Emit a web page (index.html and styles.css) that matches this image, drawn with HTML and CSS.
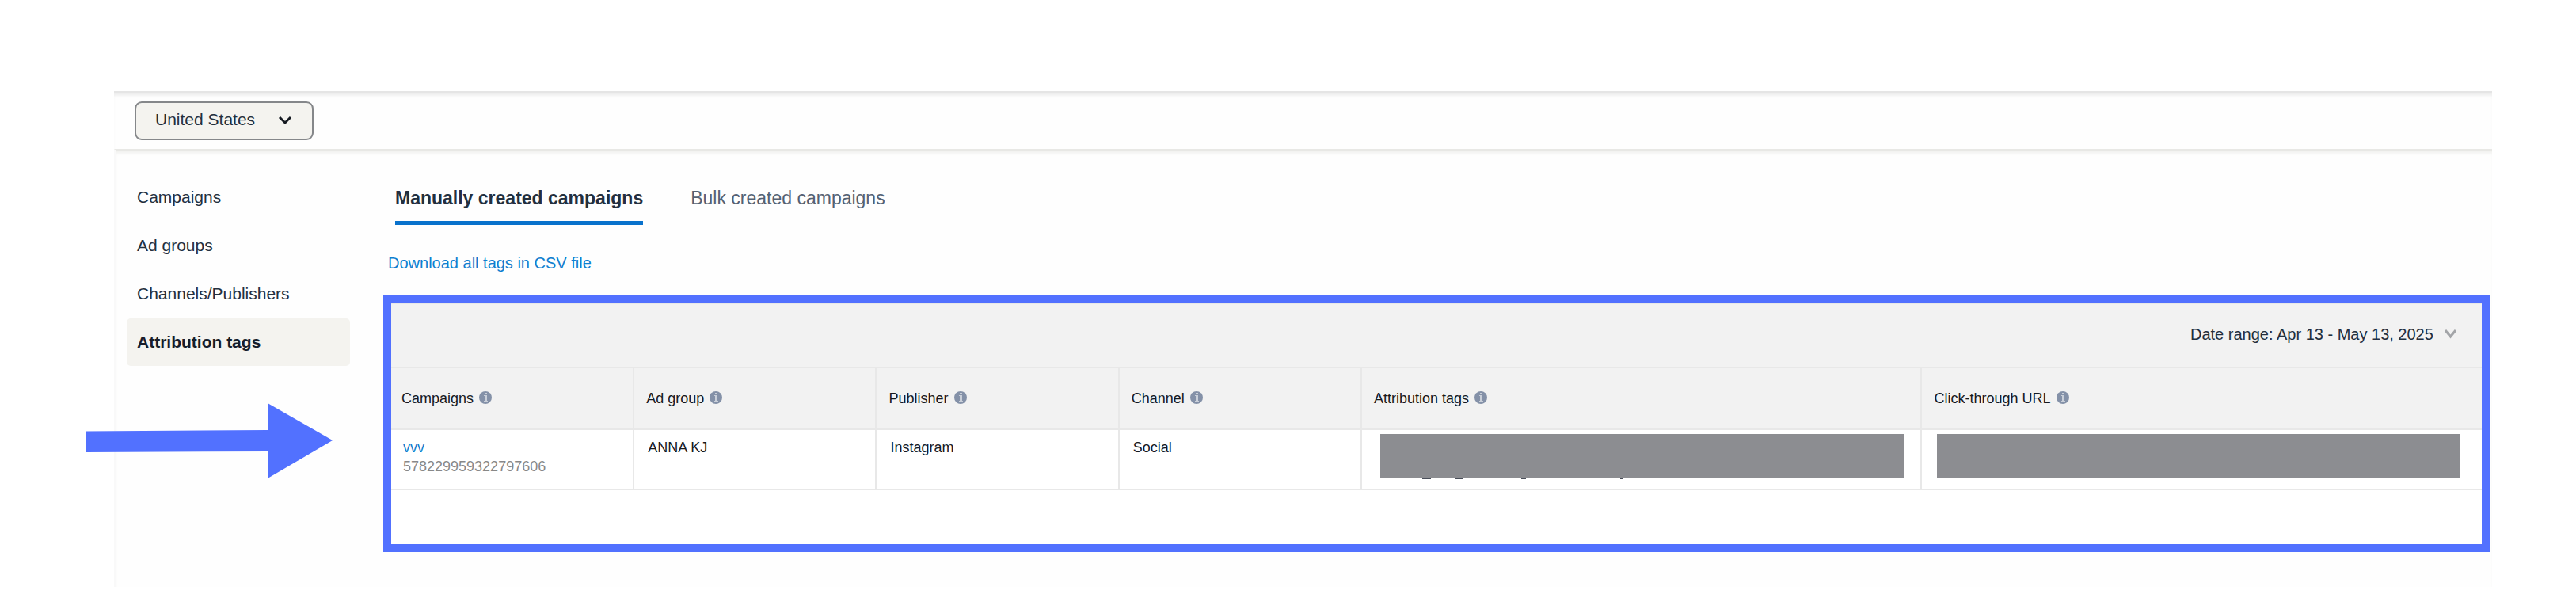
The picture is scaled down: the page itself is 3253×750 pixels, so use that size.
FILE: index.html
```html
<!DOCTYPE html>
<html lang="en">
  <head>
    <meta charset="UTF-8" />
    <meta name="viewport" content="width=device-width, initial-scale=1.0" />
    <title>Attribution tags</title>
    <link rel="stylesheet" href="styles.css">
  </head>
  <body>
    <svg width="0" height="0" class="defs" aria-hidden="true">
      <symbol id="info" viewBox="0 0 16 16">
        <circle cx="8" cy="8" r="8" fill="#8491a8" />
        <path d="M7 2h3v2H7zM6 5h4v7h1v1H6v-1h1V6H6z" fill="#c9cfd9" />
      </symbol>
    </svg>

    <div class="console">
      <header class="topbar">
        <div class="dropdown country">
          <select aria-label="Country">
            <option>United States</option>
          </select>
          <svg width="18" height="12" viewBox="0 0 18 12" aria-hidden="true">
            <path d="M2 2l7 7 7-7" fill="none" stroke="#161a22" stroke-width="3" />
          </svg>
        </div>
      </header>

      <div class="layout">
        <nav class="sidebar">
          <a href="#">Campaigns</a>
          <a href="#">Ad groups</a>
          <a href="#">Channels/Publishers</a>
          <a href="#" class="active">Attribution tags</a>
        </nav>

        <main class="content">
          <div class="tabs">
            <button type="button" class="tab selected">Manually created campaigns</button>
            <button type="button" class="tab">Bulk created campaigns</button>
          </div>

          <a href="#" class="download">Download all tags in CSV file</a>

          <section class="panel">
            <div class="toolbar">
              <div class="dropdown range">
                <select aria-label="Date range">
                  <option>Date range: Apr 13 - May 13, 2025</option>
                </select>
                <svg width="15" height="12" viewBox="0 0 15 12" aria-hidden="true">
                  <path d="M1 1l6.5 8L14 1" fill="none" stroke="#a3a5a8" stroke-width="3" />
                </svg>
              </div>
            </div>

            <table class="tags">
              <colgroup>
                <col class="narrow" />
                <col class="narrow" />
                <col class="narrow" />
                <col class="narrow" />
                <col />
                <col />
              </colgroup>
              <thead>
                <tr>
                  <th>Campaigns<svg class="info"><use href="#info" /></svg></th>
                  <th>Ad group<svg class="info"><use href="#info" /></svg></th>
                  <th>Publisher<svg class="info"><use href="#info" /></svg></th>
                  <th>Channel<svg class="info"><use href="#info" /></svg></th>
                  <th>Attribution tags<svg class="info"><use href="#info" /></svg></th>
                  <th>Click-through URL<svg class="info"><use href="#info" /></svg></th>
                </tr>
              </thead>
              <tbody>
                <tr>
                  <td><a href="#">vvv</a><br /><span class="id">578229959322797606</span></td>
                  <td>ANNA KJ</td>
                  <td>Instagram</td>
                  <td>Social</td>
                  <td class="hidden-tag">
                    <div class="redacted"></div>
                    <svg class="tails" width="320" height="2" aria-hidden="true">
                      <path d="M53 0h11M94 0h11M178 0h6M303 0h3" stroke="#4a4f5a" stroke-width="2" />
                    </svg>
                  </td>
                  <td class="hidden-url"><div class="redacted"></div></td>
                </tr>
              </tbody>
            </table>
          </section>
        </main>
      </div>
    </div>

    <!-- callout arrow -->
    <svg class="arrow" width="312" height="95" viewBox="0 0 312 95" aria-hidden="true">
      <path d="M0 35.5L230 34V0l82 47-82 48V61L0 62z" fill="#5271ff" />
    </svg>
  </body>
</html>
```
FILE: styles.css
```css
* {
  box-sizing: border-box;
}
body {
  margin: 0;
  position: relative;
  padding: 115px 106px 9px 144px;
  background: #fff;
  color: #232f3e;
  font-family: "Liberation Sans", Arial, sans-serif;
  font-size: 18px;
}
.defs {
  position: absolute;
}
a {
  color: #0f7fd0;
  text-decoration: none;
}
.console {
  background: #fefefe;
}
.topbar {
  height: 73px;
  padding-top: 10px;
  padding-left: 26px;
  border-top: 3px solid #e5e5e5;
  box-shadow: inset 0 4px 4px -2px #e9e9e9;
}

/* a select with its chevron laid over the right end */
.dropdown {
  display: inline-grid;
  align-items: center;
}
.dropdown select,
.dropdown svg {
  grid-area: 1 / 1;
}
.dropdown svg {
  justify-self: end;
  pointer-events: none;
}
.dropdown select {
  appearance: none;
  margin: 0;
  border: none;
  background: none;
  color: inherit;
  font-family: inherit;
  cursor: pointer;
}
.country select {
  width: 226px;
  height: 49px;
  padding: 0 24px 5px;
  border: 2px solid #85878a;
  border-radius: 9px;
  background: #f4f3ef;
  font-size: 21px;
}
.country svg {
  margin-right: 27px;
  margin-bottom: 2px;
}

.layout {
  display: flex;
  min-height: 553px;
  border-top: 3px solid #e8e8e5;
  border-left: 3px solid #f9f9f9;
  box-shadow: inset 0 4px 4px -2px #efefec;
}
.sidebar {
  display: flex;
  flex-direction: column;
  gap: 1px;
  width: 282px;
  margin-left: 13px;
  padding-top: 28px;
}
.sidebar a {
  padding-left: 13px;
  border-radius: 5px;
  color: #232f3e;
  font-size: 21px;
  line-height: 60px;
}
.sidebar .active {
  background: #f4f3ef;
  color: #161d2b;
  font-weight: bold;
}

.content {
  flex: 1;
  margin-left: 42px;
  margin-right: 3px;
  padding-top: 35px;
}
.tabs {
  display: flex;
  gap: 60px;
  padding-left: 15px;
}
.tab {
  height: 58px;
  padding: 0 0 4px;
  border: none;
  border-bottom: 5px solid transparent;
  background: none;
  color: #546173;
  font-family: inherit;
  font-size: 23px;
  cursor: pointer;
}
.tab.selected {
  border-color: #0972cc;
  color: #232f3e;
  font-weight: bold;
}
.download {
  display: block;
  margin-top: 36px;
  padding-left: 6px;
  font-size: 20px;
  line-height: 24px;
}

.panel {
  margin-top: 28px;
  padding-top: 1px;
  padding-bottom: 68px;
  border: 10px solid #5271ff;
  background: #fff;
}
.toolbar {
  display: flex;
  justify-content: flex-end;
  align-items: center;
  height: 80px;
  padding-right: 32px;
  padding-bottom: 4px;
  background: #f2f2f2;
  border-top: 1px solid #e8e8e8;
}
.range select {
  padding: 0 28px 0 0;
  font-size: 20px;
  line-height: 24px;
}

.tags {
  width: 100%;
  table-layout: fixed;
  border-collapse: collapse;
}
.narrow {
  width: 11.6%;
}
.tags th,
.tags td {
  border-right: 2px solid #e8e8e8;
  text-align: left;
}
.tags th:last-child,
.tags td:last-child {
  border-right: none;
}
.tags th {
  height: 78px;
  padding: 0 15px;
  border-top: 2px solid #e8e8e8;
  border-bottom: 2px solid #e8e8e8;
  background: #f2f2f2;
  color: #16191f;
  font-weight: normal;
}
.tags td {
  height: 76px;
  padding: 10px 17px 0;
  border-bottom: 2px solid #e8e8e8;
  color: #16191f;
  line-height: 24px;
  vertical-align: top;
}
.tags th:first-child {
  padding-left: 13px;
}
.tags td:first-child {
  padding-left: 15px;
}
.id {
  color: #888;
}
.info {
  width: 16px;
  height: 16px;
  margin-left: 7px;
  vertical-align: -1px;
}
.redacted {
  height: 56px;
  background: #8c8d91;
}
.tags .hidden-tag {
  padding: 5px 20px 0 23px;
}
.tags .hidden-url {
  padding: 5px 28px 0 19px;
}
.tails {
  display: block;
}

.arrow {
  position: absolute;
  left: 108px;
  top: 509px;
}
```
